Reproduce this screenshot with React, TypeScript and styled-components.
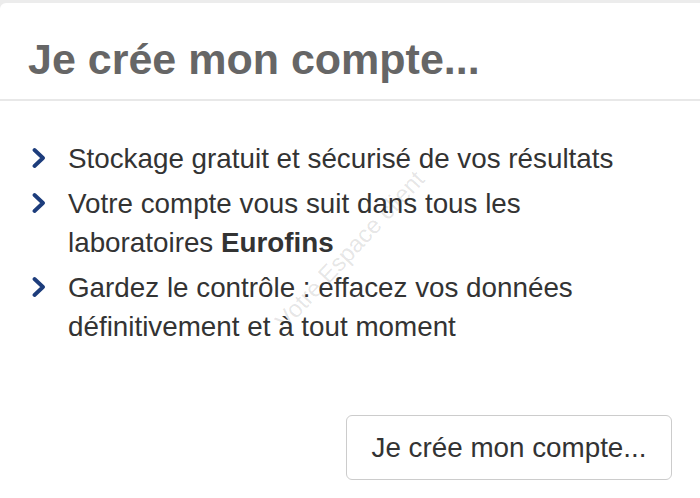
import React from "react";
import styled, { createGlobalStyle } from "styled-components";

const Global = createGlobalStyle`
  html, body { margin: 0; padding: 0; background: #ececec; }
  body { font-family: "Liberation Sans", Arial, Helvetica, sans-serif; overflow: hidden; }
`;

const Card = styled.div`
  margin-top: 3px;
  width: 710px;
  height: 495px;
  background: #fff;
  border-radius: 6px 0 0 0;
  display: flex;
  flex-direction: column;
  position: relative;
  overflow: hidden;
`;

const Header = styled.div`
  height: 98px;
  box-sizing: border-box;
  padding: 31px 0 0 28px;
  border-bottom: 2px solid #e8e8e8;
`;

const Title = styled.h1`
  margin: 0;
  font-size: 43px;
  font-weight: 700;
  color: #666;
  line-height: 50px;
`;

const Body = styled.div`
  padding: 38px 0 0 32px;
  display: flex;
  flex-direction: column;
  flex: 1;
`;

const List = styled.ul`
  list-style: none;
  margin: 0;
  padding: 0;
  display: flex;
  flex-direction: column;
  gap: 6px;
`;

const Item = styled.li`
  display: flex;
  align-items: flex-start;
  gap: 22px;
  font-size: 27.8px;
  line-height: 39px;
  color: #333;
`;

const Chevron = styled.svg`
  flex: none;
  width: 14px;
  height: 22px;
  margin-top: 8px;
`;

const Text = styled.span`
  max-width: 600px;
`;

const Footer = styled.div`
  display: flex;
  justify-content: flex-end;
  padding: 69px 38px 0 0;
`;

const Button = styled.button`
  font-family: "Liberation Sans", Arial, sans-serif;
  font-size: 27.8px;
  color: #333;
  background: #fff;
  border: 1px solid #ccc;
  border-radius: 6px;
  width: 326px;
  height: 65px;
  padding: 0;
`;

const Watermark = styled.div`
  position: absolute;
  left: 350px;
  top: 247px;
  transform: translate(-50%, -50%) rotate(-47deg);
  font-size: 24px;
  color: rgba(0, 0, 0, 0.11);
  white-space: nowrap;
  pointer-events: none;
`;

const ChevronIcon = () => (
  <Chevron viewBox="0 0 14 22">
    <path d="M2.5 3 L11 11 L2.5 19" fill="none" stroke="#1d3d7c" strokeWidth="3.8" strokeLinecap="round" strokeLinejoin="round" />
  </Chevron>
);

export default function App() {
  return (
    <>
      <Global />
      <Card>
        <Header>
          <Title>Je crée mon compte...</Title>
        </Header>
        <Body>
          <List>
            <Item>
              <ChevronIcon />
              <Text>Stockage gratuit et sécurisé de vos résultats</Text>
            </Item>
            <Item>
              <ChevronIcon />
              <Text>
                Votre compte vous suit dans tous les
                <br />
                laboratoires <b>Eurofins</b>
              </Text>
            </Item>
            <Item>
              <ChevronIcon />
              <Text>
                Gardez le contrôle : effacez vos données
                <br />
                définitivement et à tout moment
              </Text>
            </Item>
          </List>
          <Footer>
            <Button>Je crée mon compte...</Button>
          </Footer>
        </Body>
        <Watermark>Votre Espace client</Watermark>
      </Card>
    </>
  );
}
